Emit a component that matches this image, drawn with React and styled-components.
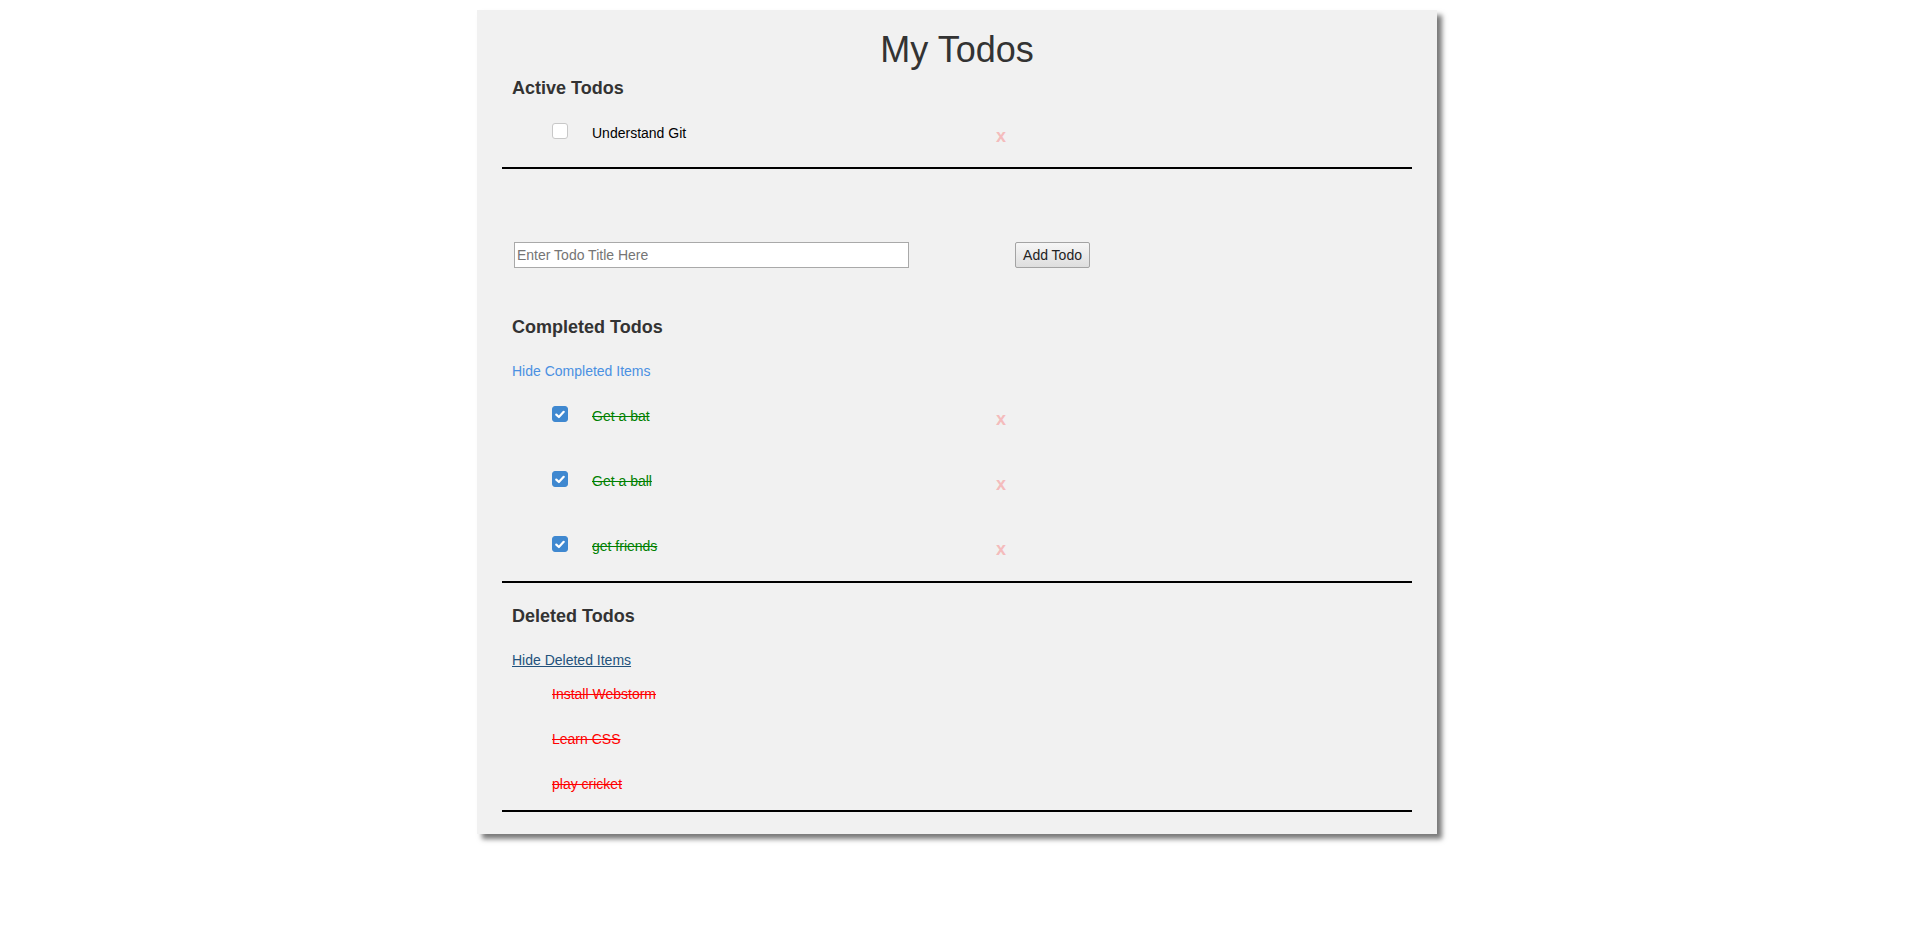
import React from "react";
import styled, { createGlobalStyle } from "styled-components";

const GlobalStyle = createGlobalStyle`
  body {
    margin: 0;
    background: #ffffff;
    font-family: "Liberation Sans", Arial, sans-serif;
    font-size: 14px;
    color: #333333;
  }
`

const Page = styled.div`
  width: 100%;
  display: flex;
  justify-content: center;
  padding: 10px 0 20px 0;
`
const Board = styled.div`
  width: 960px;
  box-sizing: border-box;
  background-color: #f1f1f1;
  padding: 20px 25px 22px 25px;
  margin-left: -3px;
  box-shadow: 5px 5px 5px #7a7a7a;
  display: flex;
  flex-direction: column;
`
const Title = styled.h1`
  margin: 0;
  font-size: 36px;
  line-height: 40px;
  font-weight: 500;
  text-align: center;
  color: #333333;
`
const SectionTitle = styled.h4`
  margin: ${(p) => p.$top || 0}px 0 0 10px;
  font-size: 18px;
  line-height: 20px;
  font-weight: bold;
  color: #333333;
`
const List = styled.div`
  display: flex;
  flex-direction: column;
  gap: ${(p) => p.$gap}px;
  margin-top: ${(p) => p.$top}px;
  margin-bottom: ${(p) => p.$bottom}px;
`
const Row = styled.div`
  display: grid;
  grid-template-columns: 16px 380px 20px;
  column-gap: 24px;
  align-items: start;
  padding-left: 50px;
  height: 20px;
`
const Box = styled.span`
  width: 16px;
  height: 16px;
  box-sizing: border-box;
  border-radius: 3px;
  border: 1px solid ${(p) => (p.$checked ? "#3f88d0" : "#c8c8c8")};
  background: ${(p) => (p.$checked ? "#3f88d0" : "#ffffff")};
  display: flex;
  align-items: center;
  justify-content: center;
`
const TodoText = styled.span`
  font-size: 14px;
  line-height: 20px;
  color: ${(p) => (p.$done ? "#008000" : "#000000")};
  text-decoration: ${(p) => (p.$done ? "line-through" : "none")};
`
const Remove = styled.span`
  font-size: 18px;
  line-height: 20px;
  font-weight: bold;
  color: #f4bcbc;
  margin-top: 3px;
`
const Rule = styled.hr`
  margin: 0;
  border: none;
  height: 2px;
  background: #000000;
`
const AddBar = styled.div`
  display: flex;
  align-items: center;
  margin: 73px 0 0 12px;
  height: 26px;
`
const TitleInput = styled.input`
  width: 395px;
  height: 26px;
  box-sizing: border-box;
  border: 1px solid #a9a9a9;
  background: #ffffff;
  padding: 0 2px;
  font-family: "Liberation Sans", Arial, sans-serif;
  font-size: 14px;
  color: #333;
  &::placeholder {
    color: #757575;
  }
`
const AddButton = styled.button`
  margin-left: 106px;
  width: 75px;
  height: 26px;
  box-sizing: border-box;
  border: 1px solid #a3a3a3;
  border-radius: 2px;
  background: linear-gradient(#f6f6f6, #dedede);
  font-family: "Liberation Sans", Arial, sans-serif;
  font-size: 14px;
  color: #222;
  padding: 0;
`
const ToggleLink = styled.a`
  display: block;
  margin: 24px 0 0 10px;
  font-size: 14px;
  line-height: 20px;
  color: ${(p) => (p.$hover ? "#23527c" : "#4a90e2")};
  text-decoration: ${(p) => (p.$hover ? "underline" : "none")};
  cursor: pointer;
  align-self: flex-start;
`
const DeletedText = styled.div`
  padding-left: 50px;
  font-size: 14px;
  line-height: 20px;
  height: 20px;
  color: #ff0000;
  text-decoration: line-through;
`

const Check = () => (
  <svg width="10" height="9" viewBox="0 0 10 9">
    <path d="M1.3 4.6 L3.9 7 L8.7 1.8" fill="none" stroke="#ffffff" strokeWidth="2.2" strokeLinecap="round" strokeLinejoin="round" />
  </svg>
)

const TodoRow = ({ title, done }) => (
  <Row>
    <Box $checked={done}>{done && <Check />}</Box>
    <TodoText $done={done}>{title}</TodoText>
    <Remove>x</Remove>
  </Row>
)

const completed = ["Get a bat", "Get a ball", "get friends"]
const deleted = ["Install Webstorm", "Learn CSS", "play cricket"]

function App() {
  return (
    <Page>
      <GlobalStyle />
      <Board>
        <Title>My Todos</Title>
        <SectionTitle $top={8}>Active Todos</SectionTitle>
        <List $gap={45} $top={25} $bottom={24}>
          <TodoRow title="Understand Git" />
        </List>
        <Rule />

        <AddBar>
          <TitleInput placeholder="Enter Todo Title Here" />
          <AddButton>Add Todo</AddButton>
        </AddBar>

        <SectionTitle $top={49}>Completed Todos</SectionTitle>
        <ToggleLink>Hide Completed Items</ToggleLink>
        <List $gap={45} $top={25} $bottom={25}>
          {completed.map((t) => (
            <TodoRow key={t} title={t} done />
          ))}
        </List>
        <Rule />

        <SectionTitle $top={23}>Deleted Todos</SectionTitle>
        <ToggleLink $hover>Hide Deleted Items</ToggleLink>
        <List $gap={25} $top={14} $bottom={16}>
          {deleted.map((t) => (
            <DeletedText key={t}>{t}</DeletedText>
          ))}
        </List>
        <Rule />
      </Board>
    </Page>
  );
}

export default App;
